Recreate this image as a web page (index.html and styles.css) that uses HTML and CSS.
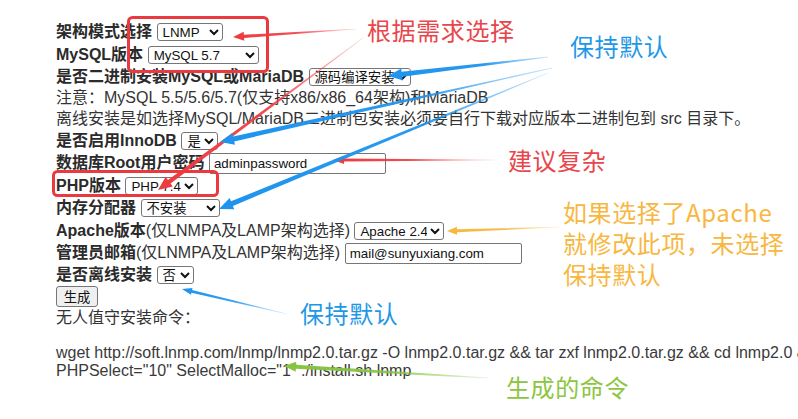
FILE: index.html
```html
<!DOCTYPE html>
<html lang="zh-CN">
<head>
<meta charset="utf-8">
<title>LNMP 无人值守安装命令生成</title>
<link rel="stylesheet" href="styles.css">
</head>
<body>
<main class="form">
  <div class="row h24"><span class="label"><b>架构模式选择</b></span><select class="sel sel-arch"><option>LNMP</option><option>LNMPA</option><option>LAMP</option></select></div>
  <div class="row h22"><span class="label"><b>MySQL版本</b></span><select class="sel sel-mysql"><option>MySQL 5.7</option><option>MySQL 8.0</option></select></div>
  <div class="row h21"><span class="label"><b>是否二进制安装MySQL或MariaDB</b></span><select class="sel sel-bin"><option>源码编译安装</option><option>二进制安装</option></select></div>
  <div class="row h21">注意：MySQL 5.5/5.6/5.7(仅支持x86/x86_64架构)和MariaDB</div>
  <div class="row h21">离线安装是如选择MySQL/MariaDB二进制包安装必须要自行下载对应版本二进制包到 src 目录下。</div>
  <div class="row h23"><span class="label"><b>是否启用InnoDB</b></span><select class="sel sel-yn"><option>是</option><option>否</option></select></div>
  <div class="row h22"><span class="label"><b>数据库Root用户密码</b></span><input class="txt" type="text" value="adminpassword"></div>
  <div class="row h23"><span class="label"><b>PHP版本</b></span><select class="sel sel-php"><option>PHP 7.4</option><option>PHP 8.0</option></select></div>
  <div class="row h22"><span class="label"><b>内存分配器</b></span><select class="sel sel-malloc"><option>不安装</option><option>Jemalloc</option></select></div>
  <div class="row h23"><span class="label"><b>Apache版本</b>(仅LNMPA及LAMP架构选择)</span><select class="sel sel-apache"><option>Apache 2.4</option><option>Apache 2.2</option></select></div>
  <div class="row h22"><span class="label"><b>管理员邮箱</b>(仅LNMPA及LAMP架构选择)</span><input class="txt" type="text" value="mail@sunyuxiang.com"></div>
  <div class="row h22"><span class="label"><b>是否离线安装</b></span><select class="sel sel-yn"><option>否</option><option>是</option></select></div>
  <div class="row h21"><button class="btn" type="button">生成</button></div>
  <div class="row h22">无人值守安装命令：</div>
  <div class="cmd">wget http://soft.lnmp.com/lnmp/lnmp2.0.tar.gz -O lnmp2.0.tar.gz &amp;&amp; tar zxf lnmp2.0.tar.gz &amp;&amp; cd lnmp2.0 &amp;&amp; LNMP_Auto="y" DBSelect="4" DB_Root_Password="adminpassword" InstallInnodb="y"<br>PHPSelect="10" SelectMalloc="1" ./install.sh lnmp</div>
</main>

<svg class="annot" width="798" height="419" viewBox="0 0 798 419" xmlns="http://www.w3.org/2000/svg">
  <defs>
    <linearGradient id="gRed1" gradientUnits="userSpaceOnUse" x1="356" y1="29" x2="233" y2="37">
      <stop offset="0" stop-color="#ee3a3f" stop-opacity="0.2"/><stop offset="0.5" stop-color="#ee3a3f" stop-opacity="0.9"/><stop offset="1" stop-color="#ee3a3f"/>
    </linearGradient>
    <linearGradient id="gRed2" gradientUnits="userSpaceOnUse" x1="363" y1="38" x2="158" y2="190">
      <stop offset="0" stop-color="#ee3a3f" stop-opacity="0.2"/><stop offset="0.45" stop-color="#ee3a3f" stop-opacity="0.9"/><stop offset="1" stop-color="#ee3a3f"/>
    </linearGradient>
    <linearGradient id="gRed3" gradientUnits="userSpaceOnUse" x1="495" y1="160" x2="333" y2="160">
      <stop offset="0" stop-color="#ee3a3f" stop-opacity="0.15"/><stop offset="0.5" stop-color="#ee3a3f" stop-opacity="0.9"/><stop offset="1" stop-color="#ee3a3f"/>
    </linearGradient>
    <linearGradient id="gBlueA" gradientUnits="userSpaceOnUse" x1="548" y1="57" x2="388" y2="76">
      <stop offset="0" stop-color="#1e94ee" stop-opacity="0.2"/><stop offset="0.4" stop-color="#1e94ee" stop-opacity="0.95"/><stop offset="1" stop-color="#1e94ee"/>
    </linearGradient>
    <linearGradient id="gBlueB" gradientUnits="userSpaceOnUse" x1="552" y1="68" x2="220" y2="142">
      <stop offset="0" stop-color="#1e94ee" stop-opacity="0.2"/><stop offset="0.4" stop-color="#1e94ee" stop-opacity="0.95"/><stop offset="1" stop-color="#1e94ee"/>
    </linearGradient>
    <linearGradient id="gBlueC" gradientUnits="userSpaceOnUse" x1="548" y1="73" x2="219" y2="209">
      <stop offset="0" stop-color="#1e94ee" stop-opacity="0.2"/><stop offset="0.4" stop-color="#1e94ee" stop-opacity="0.95"/><stop offset="1" stop-color="#1e94ee"/>
    </linearGradient>
    <linearGradient id="gBlueD" gradientUnits="userSpaceOnUse" x1="287" y1="314" x2="182" y2="289">
      <stop offset="0" stop-color="#1e94ee" stop-opacity="0.15"/><stop offset="0.5" stop-color="#1e94ee" stop-opacity="0.9"/><stop offset="1" stop-color="#1e94ee"/>
    </linearGradient>
    <linearGradient id="gOrange" gradientUnits="userSpaceOnUse" x1="560" y1="227" x2="447" y2="231">
      <stop offset="0" stop-color="#f6b73c" stop-opacity="0.2"/><stop offset="0.5" stop-color="#f6b73c" stop-opacity="0.9"/><stop offset="1" stop-color="#f6b73c"/>
    </linearGradient>
    <linearGradient id="gGreen" gradientUnits="userSpaceOnUse" x1="488" y1="378" x2="284" y2="366">
      <stop offset="0" stop-color="#86c440" stop-opacity="0.15"/><stop offset="0.5" stop-color="#86c440" stop-opacity="0.9"/><stop offset="1" stop-color="#86c440"/>
    </linearGradient>
  </defs>

  <!-- red highlight boxes -->
  <rect x="128.5" y="17.5" width="139" height="54" rx="4" fill="none" stroke="#ea3a3f" stroke-width="3"/>
  <rect x="53.5" y="171.5" width="164" height="24" rx="4" fill="none" stroke="#ea3a3f" stroke-width="3"/>

  <!-- red arrows -->
  <polygon fill="url(#gRed1)" points="355.98,28.7 243.88,34.69 243.69,31.8 233,37 244.27,40.78 244.08,37.89 356.02,29.3"/>
  <polygon fill="url(#gRed2)" points="362.82,37.76 167.94,179.89 165.68,176.84 158,190 172.82,186.48 170.56,183.43 363.18,38.24"/>
  <polygon fill="url(#gRed3)" points="495,159.7 344,158.4 344,156 333,160 344,164 344,161.6 495,160.3"/>

  <!-- blue arrows -->
  <polygon fill="url(#gBlueA)" points="547.95,56.6 401.6,71.87 401.19,68.39 388,76 402.61,80.31 402.19,76.83 548.05,57.4"/>
  <polygon fill="url(#gBlueB)" points="551.91,67.61 233.13,136.51 232.36,133.09 220,142 234.98,144.81 234.21,141.39 552.09,68.39"/>
  <polygon fill="url(#gBlueC)" points="547.85,72.63 230.99,201.34 229.65,198.11 219,209 234.23,209.2 232.9,205.96 548.15,73.37"/>
  <polygon fill="url(#gBlueD)" points="287.07,313.71 192.05,289.96 192.54,287.91 182,289 190.92,294.73 191.41,292.68 286.93,314.29"/>

  <!-- orange arrow -->
  <polygon fill="url(#gOrange)" points="559.99,226.7 456.96,229.33 456.89,226.73 447,231 457.11,234.73 457.04,232.13 560.01,227.3"/>

  <!-- green arrow -->
  <polygon fill="url(#gGreen)" points="488.02,377.6 296.1,364.7 296.27,361.71 284,366 295.69,371.69 295.86,368.7 487.98,378.4"/>
</svg>

<div class="note red n-choose">根据需求选择</div>
<div class="note blue n-default1">保持默认</div>
<div class="note red n-complex">建议复杂</div>
<div class="note orange n-apache">如果选择了Apache<br>就修改此项，未选择<br>保持默认</div>
<div class="note blue n-default2">保持默认</div>
<div class="note green n-cmd">生成的命令</div>
</body>
</html>
```

FILE: styles.css
```css
html, body {
  margin: 0;
  padding: 0;
  background: #ffffff;
}

body {
  position: relative;
  width: 798px;
  height: 419px;
  overflow: hidden;
  font-family: "Liberation Sans", Arial, "Noto Sans CJK SC", sans-serif;
  font-size: 16px;
  color: #333333;
}

.form {
  padding: 20px 0 0 56px;
}

.row {
  display: flex;
  align-items: center;
  gap: 4.5px;
  white-space: nowrap;
}

.h21 { height: 21px; line-height: 21px; }
.h22 { height: 22px; line-height: 22px; }
.h23 { height: 23px; line-height: 23px; }
.h24 { height: 24px; line-height: 24px; }

.label b {
  font-weight: bold;
  color: #2b2b2b;
}

.sel {
  box-sizing: border-box;
  height: 18px;
  padding: 0 0 0 1px;
  font-family: "Liberation Sans", Arial, "Noto Sans CJK SC", sans-serif;
  font-size: 13.33px;
  color: #111111;
  background: #ffffff;
  border: 1px solid #767676;
  border-radius: 3px;
}

.sel-arch { width: 66px; }
.sel-mysql { width: 111px; }
.sel-bin { width: 102px; }
.sel-yn { width: 37px; }
.sel-php { width: 73px; }
.sel-malloc { width: 79px; }
.sel-apache { width: 90px; }

.txt {
  box-sizing: border-box;
  width: 177px;
  height: 21px;
  padding: 1px 4px;
  font-family: "Liberation Sans", Arial, sans-serif;
  font-size: 13.33px;
  color: #111111;
  background: #ffffff;
  border: 1px solid #767676;
  border-radius: 2px;
}

.btn {
  box-sizing: border-box;
  width: 42px;
  height: 21px;
  padding: 0 6px;
  font-family: "Liberation Sans", Arial, "Noto Sans CJK SC", sans-serif;
  font-size: 13.33px;
  color: #111111;
  background: #efefef;
  border: 1px solid #767676;
  border-radius: 3px;
}

.cmd {
  margin-top: 15px;
  line-height: 18px;
  white-space: nowrap;
  color: #3a3a3a;
}

.annot {
  position: absolute;
  left: 0;
  top: 0;
  pointer-events: none;
}

.note {
  position: absolute;
  font-family: "Noto Sans CJK SC", "Liberation Sans", sans-serif;
  font-size: 24px;
  line-height: 30px;
  letter-spacing: 0.6px;
  white-space: nowrap;
}

.red { color: #e8464b; }
.blue { color: #1e98e6; }
.orange { color: #f7b740; line-height: 31px; }
.green { color: #8cc63f; }

.n-choose { left: 367px; top: 15px; }
.n-default1 { left: 570px; top: 31px; }
.n-complex { left: 508px; top: 145px; }
.n-apache { left: 563px; top: 196px; }
.n-default2 { left: 300px; top: 298px; }
.n-cmd { left: 506px; top: 372px; }
```
